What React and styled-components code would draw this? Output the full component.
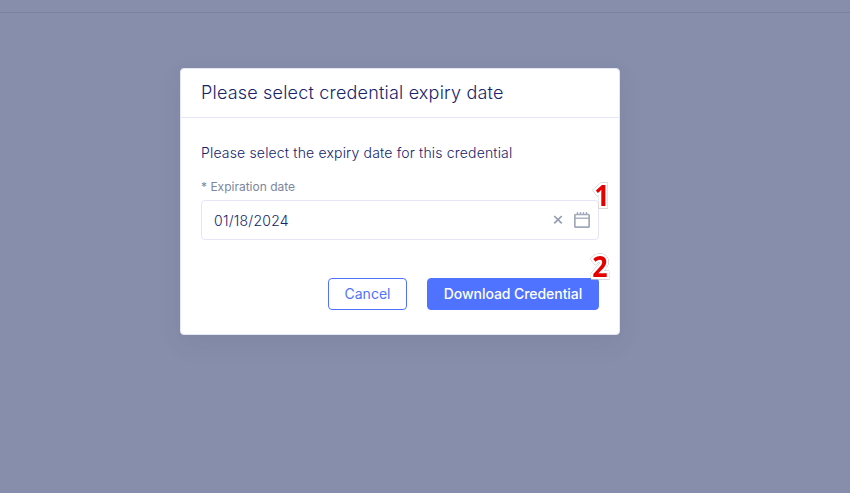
import React from "react";
import styled, { createGlobalStyle } from "styled-components";

const GlobalStyle = createGlobalStyle`
  * { box-sizing: border-box; }
  body { margin: 0; font-family: Inter, "Liberation Sans", sans-serif; background: #878eab; }
`;

const Page = styled.main`
  height: 493px;
  overflow: hidden;
  display: flex;
  flex-direction: column;
  background: #878eab;
`;

const TopBar = styled.div`
  flex: none;
  height: 13px;
  border-bottom: 1px solid #7981a4;
`;

const Dialog = styled.section`
  width: 440px;
  height: 267px;
  margin: 55px 0 0 180px;
  display: flex;
  flex-direction: column;
  background: #fff;
  border: 1px solid #e4e6f3;
  border-radius: 4px;
  box-shadow: 0 8px 24px rgba(50, 58, 100, 0.09);
`;

const DialogHeader = styled.header`
  height: 49px;
  padding: 0 20px;
  display: flex;
  align-items: center;
  border-bottom: 1px solid #e4e5f5;
`;

const Title = styled.h1`
  margin: 0;
  font-size: 18px;
  line-height: 24px;
  font-weight: 300;
  letter-spacing: 0.19px;
  color: #15246b;
`;

const Body = styled.div`
  padding: 25px 20px 0;
  display: flex;
  flex-direction: column;
`;

const Message = styled.p`
  margin: 0;
  font-size: 14px;
  line-height: 20px;
  font-weight: 300;
  letter-spacing: 0.17px;
  color: #15246b;
`;

const Label = styled.label`
  margin-top: 16px;
  font-size: 12px;
  line-height: 16px;
  color: #7c86a0;
`;

const Field = styled.div`
  position: relative;
  height: 40px;
  margin-top: 5px;
  padding: 0 8px 0 12px;
  display: flex;
  align-items: center;
  border: 1px solid #e4e5f5;
  border-radius: 4px;
`;

const Value = styled.span`
  flex: 1;
  padding-top: 2px;
  font-size: 14px;
  line-height: 20px;
  font-weight: 300;
  letter-spacing: 0.25px;
  color: #15246b;
`;

const ClearIcon = styled.svg`
  width: 10px;
  height: 10px;
  margin-right: 11px;
`;

const CalendarIcon = styled.svg`
  width: 16px;
  height: 18px;
`;

const Actions = styled.footer`
  margin-top: 38px;
  display: flex;
  justify-content: flex-end;
  gap: 20px;
`;

const Button = styled.button`
  position: relative;
  width: ${(p) => (p.$primary ? "172px" : "79px")};
  height: 32px;
  padding: 0;
  border: 1px solid #4f73ff;
  border-radius: 4px;
  background: ${(p) => (p.$primary ? "#4f73ff" : "#fff")};
  color: ${(p) => (p.$primary ? "#fff" : "#4f73ff")};
  font: ${(p) => (p.$primary ? 500 : 400)} 14px/20px Inter, "Liberation Sans", sans-serif;
  letter-spacing: ${(p) => (p.$primary ? "-0.06px" : "0")};
`;

const StepBadge = styled.span`
  position: absolute;
  top: ${(p) => p.$top}px;
  right: ${(p) => p.$right}px;
  font: 700 28px/32px "Open Sans", "Noto Sans", sans-serif;
  letter-spacing: 0;
  color: #e60000;
  transform: scaleX(0.96);
  -webkit-text-stroke: 5px #fff;
  stroke-linejoin: round;
  paint-order: stroke fill;
  filter: drop-shadow(0.7px 0.9px 0.6px rgba(0, 0, 0, 0.6));
`;

export default function App() {
  return (
    <Page>
      <GlobalStyle />
      <TopBar />
      <Dialog role="dialog" aria-labelledby="dialog-title">
        <DialogHeader>
          <Title id="dialog-title">Please select credential expiry date</Title>
        </DialogHeader>
        <Body>
          <Message>Please select the expiry date for this credential</Message>
          <Label>* Expiration date</Label>
          <Field>
            <Value>01/18/2024</Value>
            <ClearIcon viewBox="0 0 10 10" fill="none" stroke="#949db2" strokeWidth="1.7">
              <path d="M1.2 1l7.6 7.4M8.8 1L1.2 8.4" />
            </ClearIcon>
            <CalendarIcon viewBox="0 0 16 18" fill="none" stroke="#a0a8ba" strokeWidth="1.7">
              <rect x="0.85" y="3.5" width="14.3" height="12.7" rx="0.8" />
              <path d="M1 7.2h14" strokeWidth="1.3" />
              <path d="M3.5 1v2.5M6.5 1v2.5M9.5 1v2.5M12.5 1v2.5" strokeWidth="1.3" />
            </CalendarIcon>
            <StepBadge $top={-22} $right={-12}>1</StepBadge>
          </Field>
          <Actions>
            <Button type="button">Cancel</Button>
            <Button type="button" $primary>
              Download Credential
              <StepBadge $top={-29} $right={-10}>2</StepBadge>
            </Button>
          </Actions>
        </Body>
      </Dialog>
    </Page>
  );
}
